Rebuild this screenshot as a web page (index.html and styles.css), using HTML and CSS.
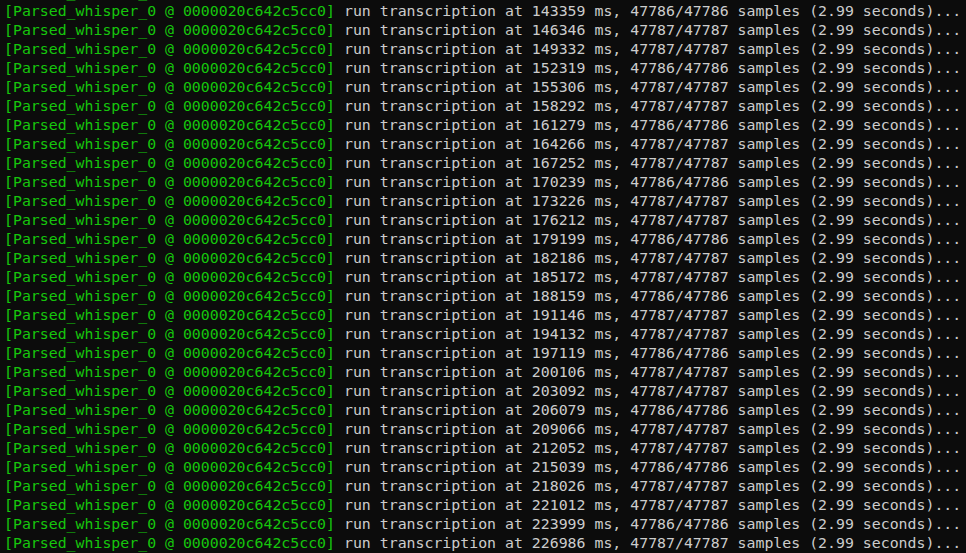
FILE: index.html
```html
<!DOCTYPE html>
<html lang="en">
<head>
    <meta charset="UTF-8">
    <meta name="viewport" content="width=device-width, initial-scale=1.0">
    <title>Terminal</title>
    <link rel="stylesheet" href="styles.css">
</head>
<body>

<div class="terminal">
    <div class="line"><span class="tag">[Parsed_whisper_0 @ 0000020c642c5cc0]</span> run transcription at 140372 ms, 47787/47787 samples (2.99 seconds)...</div>
    <div class="line"><span class="tag">[Parsed_whisper_0 @ 0000020c642c5cc0]</span> run transcription at 143359 ms, 47786/47786 samples (2.99 seconds)...</div>
    <div class="line"><span class="tag">[Parsed_whisper_0 @ 0000020c642c5cc0]</span> run transcription at 146346 ms, 47787/47787 samples (2.99 seconds)...</div>
    <div class="line"><span class="tag">[Parsed_whisper_0 @ 0000020c642c5cc0]</span> run transcription at 149332 ms, 47787/47787 samples (2.99 seconds)...</div>
    <div class="line"><span class="tag">[Parsed_whisper_0 @ 0000020c642c5cc0]</span> run transcription at 152319 ms, 47786/47786 samples (2.99 seconds)...</div>
    <div class="line"><span class="tag">[Parsed_whisper_0 @ 0000020c642c5cc0]</span> run transcription at 155306 ms, 47787/47787 samples (2.99 seconds)...</div>
    <div class="line"><span class="tag">[Parsed_whisper_0 @ 0000020c642c5cc0]</span> run transcription at 158292 ms, 47787/47787 samples (2.99 seconds)...</div>
    <div class="line"><span class="tag">[Parsed_whisper_0 @ 0000020c642c5cc0]</span> run transcription at 161279 ms, 47786/47786 samples (2.99 seconds)...</div>
    <div class="line"><span class="tag">[Parsed_whisper_0 @ 0000020c642c5cc0]</span> run transcription at 164266 ms, 47787/47787 samples (2.99 seconds)...</div>
    <div class="line"><span class="tag">[Parsed_whisper_0 @ 0000020c642c5cc0]</span> run transcription at 167252 ms, 47787/47787 samples (2.99 seconds)...</div>
    <div class="line"><span class="tag">[Parsed_whisper_0 @ 0000020c642c5cc0]</span> run transcription at 170239 ms, 47786/47786 samples (2.99 seconds)...</div>
    <div class="line"><span class="tag">[Parsed_whisper_0 @ 0000020c642c5cc0]</span> run transcription at 173226 ms, 47787/47787 samples (2.99 seconds)...</div>
    <div class="line"><span class="tag">[Parsed_whisper_0 @ 0000020c642c5cc0]</span> run transcription at 176212 ms, 47787/47787 samples (2.99 seconds)...</div>
    <div class="line"><span class="tag">[Parsed_whisper_0 @ 0000020c642c5cc0]</span> run transcription at 179199 ms, 47786/47786 samples (2.99 seconds)...</div>
    <div class="line"><span class="tag">[Parsed_whisper_0 @ 0000020c642c5cc0]</span> run transcription at 182186 ms, 47787/47787 samples (2.99 seconds)...</div>
    <div class="line"><span class="tag">[Parsed_whisper_0 @ 0000020c642c5cc0]</span> run transcription at 185172 ms, 47787/47787 samples (2.99 seconds)...</div>
    <div class="line"><span class="tag">[Parsed_whisper_0 @ 0000020c642c5cc0]</span> run transcription at 188159 ms, 47786/47786 samples (2.99 seconds)...</div>
    <div class="line"><span class="tag">[Parsed_whisper_0 @ 0000020c642c5cc0]</span> run transcription at 191146 ms, 47787/47787 samples (2.99 seconds)...</div>
    <div class="line"><span class="tag">[Parsed_whisper_0 @ 0000020c642c5cc0]</span> run transcription at 194132 ms, 47787/47787 samples (2.99 seconds)...</div>
    <div class="line"><span class="tag">[Parsed_whisper_0 @ 0000020c642c5cc0]</span> run transcription at 197119 ms, 47786/47786 samples (2.99 seconds)...</div>
    <div class="line"><span class="tag">[Parsed_whisper_0 @ 0000020c642c5cc0]</span> run transcription at 200106 ms, 47787/47787 samples (2.99 seconds)...</div>
    <div class="line"><span class="tag">[Parsed_whisper_0 @ 0000020c642c5cc0]</span> run transcription at 203092 ms, 47787/47787 samples (2.99 seconds)...</div>
    <div class="line"><span class="tag">[Parsed_whisper_0 @ 0000020c642c5cc0]</span> run transcription at 206079 ms, 47786/47786 samples (2.99 seconds)...</div>
    <div class="line"><span class="tag">[Parsed_whisper_0 @ 0000020c642c5cc0]</span> run transcription at 209066 ms, 47787/47787 samples (2.99 seconds)...</div>
    <div class="line"><span class="tag">[Parsed_whisper_0 @ 0000020c642c5cc0]</span> run transcription at 212052 ms, 47787/47787 samples (2.99 seconds)...</div>
    <div class="line"><span class="tag">[Parsed_whisper_0 @ 0000020c642c5cc0]</span> run transcription at 215039 ms, 47786/47786 samples (2.99 seconds)...</div>
    <div class="line"><span class="tag">[Parsed_whisper_0 @ 0000020c642c5cc0]</span> run transcription at 218026 ms, 47787/47787 samples (2.99 seconds)...</div>
    <div class="line"><span class="tag">[Parsed_whisper_0 @ 0000020c642c5cc0]</span> run transcription at 221012 ms, 47787/47787 samples (2.99 seconds)...</div>
    <div class="line"><span class="tag">[Parsed_whisper_0 @ 0000020c642c5cc0]</span> run transcription at 223999 ms, 47786/47786 samples (2.99 seconds)...</div>
    <div class="line"><span class="tag">[Parsed_whisper_0 @ 0000020c642c5cc0]</span> run transcription at 226986 ms, 47787/47787 samples (2.99 seconds)...</div>
</div>

</body>
</html>
```

FILE: styles.css
```css
html, body {
    margin: 0;
    height: 100%;
    overflow: hidden;
    background-color: #0c0c0c;
}
.terminal {
    margin-top: -17px;
    padding-left: 4px;
    font-family: "DejaVu Sans Mono", monospace;
    font-size: 14.87px;
    line-height: 19px;
    color: #cccccc;
}
.line {
    white-space: pre;
}
.tag {
    color: #16c60c;
}
```
